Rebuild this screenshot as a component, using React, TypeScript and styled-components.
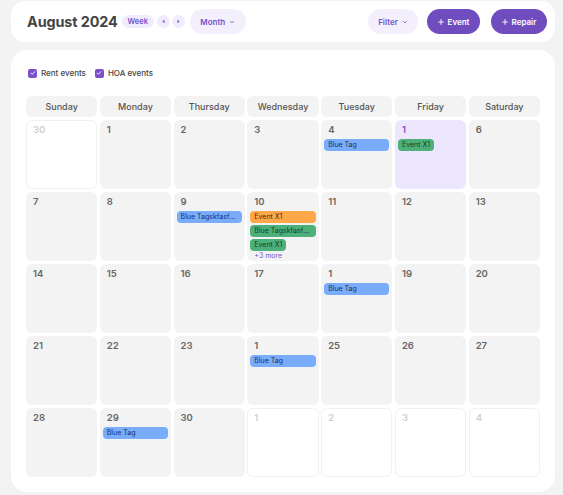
import React from "react";
import styled, { createGlobalStyle } from "styled-components";

const Global = createGlobalStyle`
  html, body { margin: 0; padding: 0; background: #f3f3f3; }
  body { font-family: Inter, "Noto Sans", "Liberation Sans", sans-serif; }
  * { box-sizing: border-box; }
`;

const Page = styled.div`
  padding: 1px 8px 0 11px;
  width: 563px;
`;

const HeaderCard = styled.div`
  height: 41px;
  background: #fff;
  border-radius: 14px;
  display: flex;
  align-items: center;
  padding: 0 8px 0 16px;
`;

const Title = styled.h1`
  margin: 0 4px 0 0;
  font-size: 14.4px;
  font-weight: 700;
  color: #444;
  letter-spacing: -0.1px;
`;

const SmallPill = styled.button`
  height: 13px;
  width: 32px;
  padding: 0;
  border: none;
  border-radius: 7px;
  background: #f1ecfd;
  color: #7552c9;
  font-family: inherit;
  font-size: 7.5px;
  font-weight: 600;
  display: flex;
  align-items: center;
  justify-content: center;
  margin-right: 3px;
`;

const RoundBtn = styled.button`
  width: 13px;
  height: 13px;
  border: none;
  border-radius: 50%;
  background: #f1ecfd;
  padding: 0;
  display: flex;
  align-items: center;
  justify-content: center;
  margin-right: 2px;
`;

const Pill = styled.button<{ $w: number; $solid?: boolean }>`
  height: 25px;
  width: ${(p) => p.$w}px;
  border: none;
  border-radius: 13px;
  background: ${(p) => (p.$solid ? "#6f4dbf" : "#f3effd")};
  color: ${(p) => (p.$solid ? "#fff" : "#7552c9")};
  font-family: inherit;
  font-size: 8px;
  font-weight: 600;
  display: flex;
  align-items: center;
  justify-content: center;
  gap: 4px;
  padding: 0;
`;

const Spacer = styled.div`
  flex: 1;
`;

const Card = styled.div`
  margin-top: 8px;
  background: #fff;
  border-radius: 16px;
  padding: 14px 15px 15px;
`;

const Filters = styled.div`
  display: flex;
  align-items: center;
  gap: 9px;
  margin: 1px 0 0 2px;
  height: 16px;
`;

const Check = styled.label`
  display: flex;
  align-items: center;
  gap: 4px;
  font-size: 8px;
  color: #444;
  font-weight: 500;
`;

const Box = styled.span`
  width: 9px;
  height: 9px;
  border-radius: 2px;
  background: #7a51c9;
  display: flex;
  align-items: center;
  justify-content: center;
`;

const Grid = styled.div`
  margin-top: 15px;
  display: grid;
  grid-template-columns: repeat(7, 1fr);
  grid-template-rows: 21px repeat(5, 69px);
  gap: 3px 2.5px;
`;

const DayHead = styled.div`
  background: #f3f3f3;
  border-radius: 6px;
  display: flex;
  align-items: center;
  justify-content: center;
  font-size: 9px;
  font-weight: 500;
  color: #555;
`;

const Cell = styled.div<{ $kind: "in" | "out" | "today" }>`
  border-radius: 6px;
  background: ${(p) => (p.$kind === "out" ? "#fff" : p.$kind === "today" ? "#ede7fd" : "#f3f3f3")};
  border: 1px solid ${(p) => (p.$kind === "out" ? "#f1f1f1" : "transparent")};
  padding: 2px 1px 0;
  display: flex;
  flex-direction: column;
  gap: 2px;
  min-width: 0;
  overflow: hidden;
  & > * {
    flex-shrink: 0;
  }
`;

const DayNum = styled.div<{ $kind: "in" | "out" | "today" }>`
  font-size: 9.5px;
  font-weight: 600;
  line-height: 13px;
  padding-left: 5px;
  margin-bottom: 1px;
  color: ${(p) => (p.$kind === "out" ? "#cfcfcf" : p.$kind === "today" ? "#7a51c9" : "#666")};
`;

const tagColors = {
  blue: { bg: "#79adfc", fg: "#1d2f52" },
  green: { bg: "#4db07a", fg: "#173b26" },
  orange: { bg: "#ffa84a", fg: "#4a2a08" },
};

const Tag = styled.div<{ $c: keyof typeof tagColors; $fit?: boolean }>`
  height: 12px;
  border-radius: 4px;
  background: ${(p) => tagColors[p.$c].bg};
  color: ${(p) => tagColors[p.$c].fg};
  font-size: 7px;
  line-height: 12px;
  padding: 0 4px;
  white-space: nowrap;
  overflow: hidden;
  text-overflow: ellipsis;
  align-self: ${(p) => (p.$fit ? "flex-start" : "stretch")};
  margin: 0 1px;
`;

const More = styled.div`
  font-size: 7px;
  color: #7552c9;
  padding-left: 5px;
  line-height: 8px;
  margin-top: -1px;
`;

const Chevron = ({ color }: { color: string }) => (
  <svg width="6" height="6" viewBox="0 0 10 10">
    <path d="M2.5 4l2.5 2.5L7.5 4" fill="none" stroke={color} strokeWidth="1.4" strokeLinecap="round" strokeLinejoin="round" />
  </svg>
);

const Arrow = ({ dir }: { dir: "l" | "r" }) => (
  <svg width="5" height="5" viewBox="0 0 10 10">
    <path d={dir === "l" ? "M7 1.5L2.5 5 7 8.5z" : "M3 1.5L7.5 5 3 8.5z"} fill="#7552c9" />
  </svg>
);

const Plus = () => (
  <svg width="6" height="6" viewBox="0 0 10 10">
    <path d="M5 1v8M1 5h8" stroke="#fff" strokeWidth="1.5" strokeLinecap="round" />
  </svg>
);

const Tick = () => (
  <svg width="6" height="6" viewBox="0 0 10 10">
    <path d="M2 5.2l2 2 4-4.4" fill="none" stroke="#fff" strokeWidth="1.6" strokeLinecap="round" strokeLinejoin="round" />
  </svg>
);

type Ev = { label: string; c: keyof typeof tagColors; fit?: boolean };
type Day = { n: string; kind: "in" | "out" | "today"; ev?: Ev[]; more?: string };

const blue: Ev = { label: "Blue Tag", c: "blue" };

const days: Day[] = [
  { n: "30", kind: "out" },
  { n: "1", kind: "in" },
  { n: "2", kind: "in" },
  { n: "3", kind: "in" },
  { n: "4", kind: "in", ev: [blue] },
  { n: "1", kind: "today", ev: [{ label: "Event X1", c: "green", fit: true }] },
  { n: "6", kind: "in" },
  { n: "7", kind: "in" },
  { n: "8", kind: "in" },
  { n: "9", kind: "in", ev: [{ label: "Blue Tagskfasfafasfasf", c: "blue" }] },
  {
    n: "10",
    kind: "in",
    ev: [
      { label: "Event X1", c: "orange" },
      { label: "Blue Tagskfasfafasfasf", c: "green" },
      { label: "Event X1", c: "green", fit: true },
    ],
    more: "+3 more",
  },
  { n: "11", kind: "in" },
  { n: "12", kind: "in" },
  { n: "13", kind: "in" },
  { n: "14", kind: "in" },
  { n: "15", kind: "in" },
  { n: "16", kind: "in" },
  { n: "17", kind: "in" },
  { n: "1", kind: "in", ev: [blue] },
  { n: "19", kind: "in" },
  { n: "20", kind: "in" },
  { n: "21", kind: "in" },
  { n: "22", kind: "in" },
  { n: "23", kind: "in" },
  { n: "1", kind: "in", ev: [blue] },
  { n: "25", kind: "in" },
  { n: "26", kind: "in" },
  { n: "27", kind: "in" },
  { n: "28", kind: "in" },
  { n: "29", kind: "in", ev: [blue] },
  { n: "30", kind: "in" },
  { n: "1", kind: "out" },
  { n: "2", kind: "out" },
  { n: "3", kind: "out" },
  { n: "4", kind: "out" },
];

const heads = ["Sunday", "Monday", "Thursday", "Wednesday", "Tuesday", "Friday", "Saturday"];

export default function App() {
  return (
    <Page>
      <Global />
      <HeaderCard>
        <Title>August 2024</Title>
        <SmallPill>Week</SmallPill>
        <RoundBtn>
          <Arrow dir="l" />
        </RoundBtn>
        <RoundBtn>
          <Arrow dir="r" />
        </RoundBtn>
        <Pill $w={56} style={{ marginLeft: 3 }}>
          Month <Chevron color="#7552c9" />
        </Pill>
        <Spacer />
        <Pill $w={50}>
          Filter <Chevron color="#7552c9" />
        </Pill>
        <Pill $w={53} $solid style={{ marginLeft: 9 }}>
          <Plus /> Event
        </Pill>
        <Pill $w={56} $solid style={{ marginLeft: 11 }}>
          <Plus /> Repair
        </Pill>
      </HeaderCard>
      <Card>
        <Filters>
          <Check>
            <Box>
              <Tick />
            </Box>
            Rent events
          </Check>
          <Check>
            <Box>
              <Tick />
            </Box>
            HOA events
          </Check>
        </Filters>
        <Grid>
          {heads.map((h) => (
            <DayHead key={h}>{h}</DayHead>
          ))}
          {days.map((d, i) => (
            <Cell key={i} $kind={d.kind}>
              <DayNum $kind={d.kind}>{d.n}</DayNum>
              {d.ev?.map((e, j) => (
                <Tag key={j} $c={e.c} $fit={e.fit}>
                  {e.label}
                </Tag>
              ))}
              {d.more && <More>{d.more}</More>}
            </Cell>
          ))}
        </Grid>
      </Card>
    </Page>
  );
}
